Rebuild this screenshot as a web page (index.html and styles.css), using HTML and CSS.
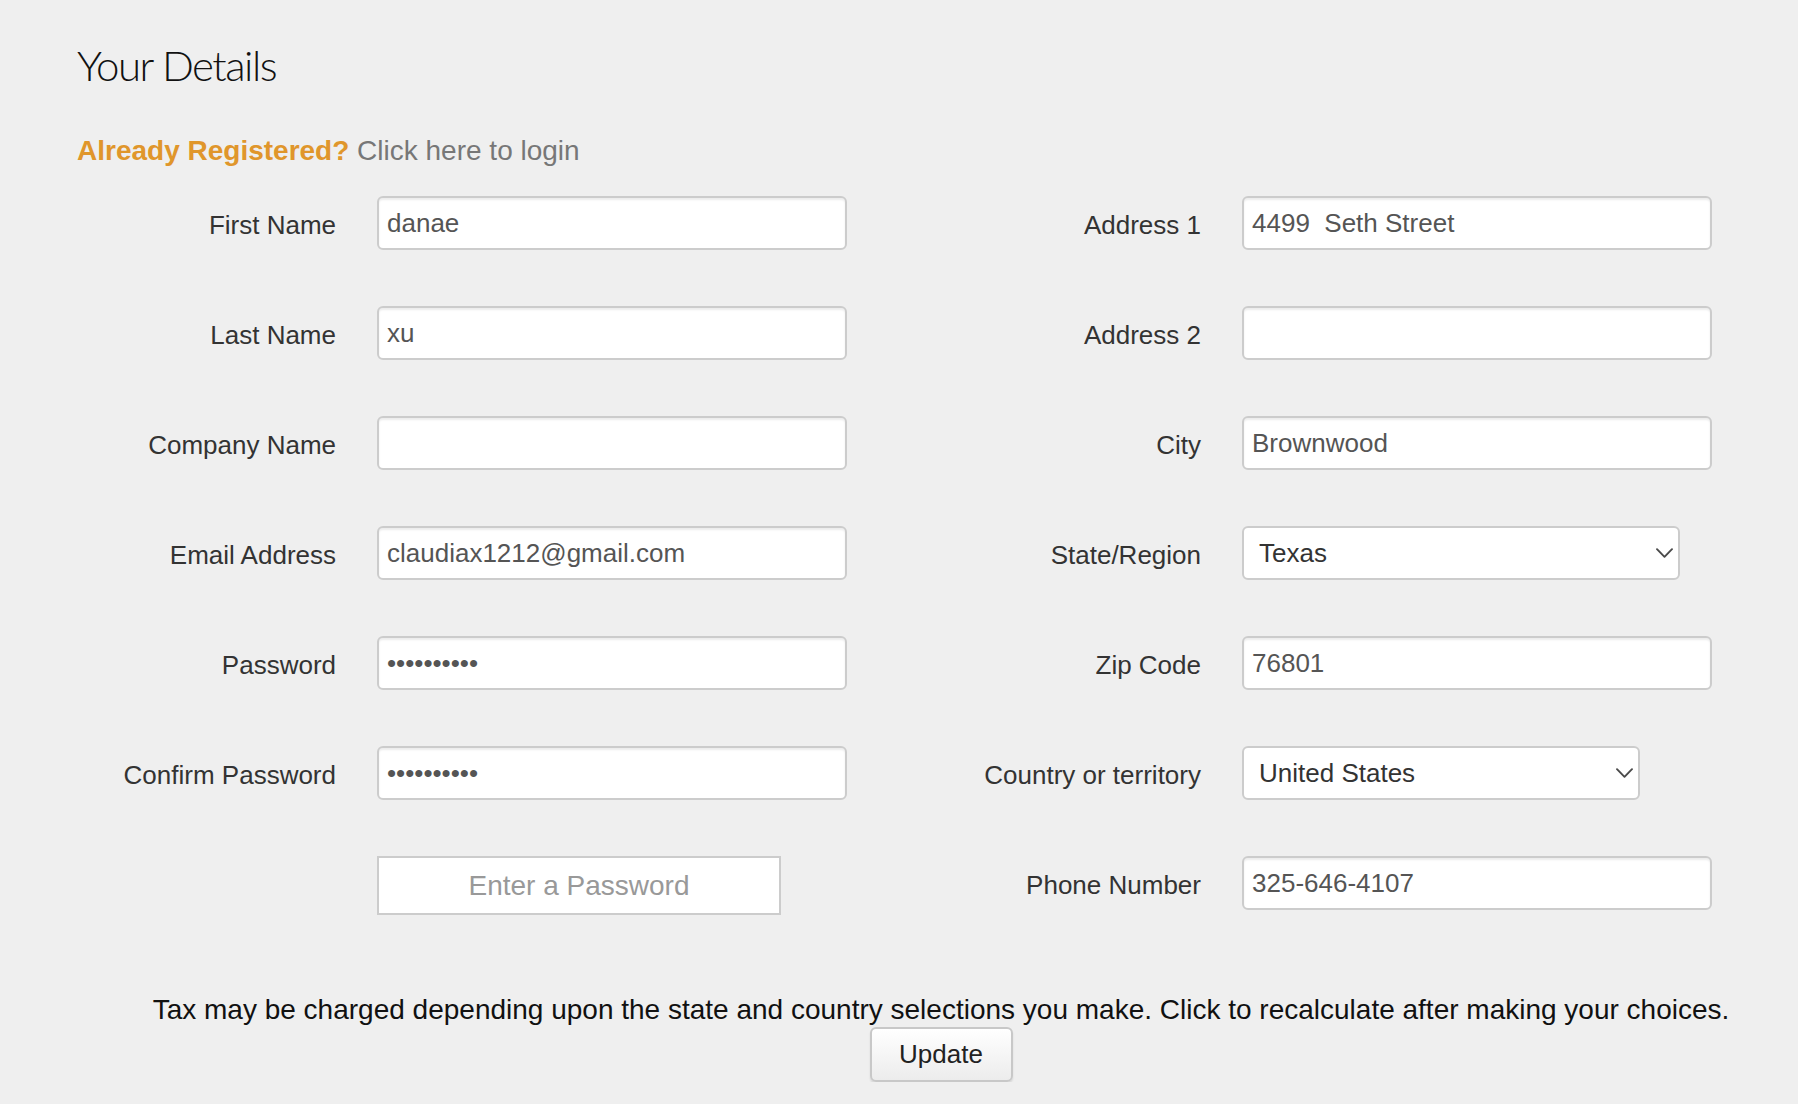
FILE: index.html
```html
<!DOCTYPE html>
<html lang="en">
<head>
<meta charset="utf-8">
<title>Your Details</title>
<link rel="stylesheet" href="styles.css">
</head>
<body>
<div class="page">
  <h1 class="title">Your Details</h1>
  <p class="login"><span class="already">Already Registered?</span> <a class="login-link" href="#">Click here to login</a></p>
  <form class="grid">
    <label class="lbl">First Name</label>
    <input class="field" type="text" value="danae">
    <label class="lbl">Address 1</label>
    <input class="field" type="text" value="4499  Seth Street">

    <label class="lbl">Last Name</label>
    <input class="field" type="text" value="xu">
    <label class="lbl">Address 2</label>
    <input class="field" type="text" value="">

    <label class="lbl">Company Name</label>
    <input class="field" type="text" value="">
    <label class="lbl">City</label>
    <input class="field" type="text" value="Brownwood">

    <label class="lbl">Email Address</label>
    <input class="field" type="text" value="claudiax1212@gmail.com">
    <label class="lbl">State/Region</label>
    <div class="select state">
      <select><option>Texas</option></select>
      <svg class="chev" viewBox="0 0 17 10" aria-hidden="true"><path d="M1 1.2 L8.5 8.8 L16 1.2" fill="none" stroke="#4a4a4a" stroke-width="1.9" stroke-linecap="round" stroke-linejoin="round"/></svg>
    </div>

    <label class="lbl">Password</label>
    <input class="field" type="password" value="aaaaaaaaaa">
    <label class="lbl">Zip Code</label>
    <input class="field" type="text" value="76801">

    <label class="lbl">Confirm Password</label>
    <input class="field" type="password" value="aaaaaaaaaa">
    <label class="lbl">Country or territory</label>
    <div class="select country">
      <select><option>United States</option></select>
      <svg class="chev" viewBox="0 0 17 10" aria-hidden="true"><path d="M1 1.2 L8.5 8.8 L16 1.2" fill="none" stroke="#4a4a4a" stroke-width="1.9" stroke-linecap="round" stroke-linejoin="round"/></svg>
    </div>

    <span class="empty"></span>
    <div class="enter">Enter a Password</div>
    <label class="lbl">Phone Number</label>
    <input class="field" type="text" value="325-646-4107">
  </form>
  <div class="footer">
    <p class="tax">Tax may be charged depending upon the state and country selections you make. Click to recalculate after making your choices.</p>
    <button class="update" type="button">Update</button>
  </div>
</div>
</body>
</html>
```
FILE: styles.css
```css
html, body {
  margin: 0;
  background: #efefef;
}
body {
  font-family: "Liberation Sans", Arial, sans-serif;
  overflow: hidden;
}
.page {
  padding: 40px 0 0 77px;
}
.title {
  margin: 0;
  font-family: Lato, "Open Sans", sans-serif;
  font-weight: 300;
  font-size: 42px;
  line-height: 50px;
  letter-spacing: -1.5px;
  color: #111;
}
.login {
  margin: 45px 0 0;
  font-size: 28px;
  line-height: 32px;
}
.already {
  color: #e0962b;
  font-weight: bold;
}
.login-link {
  color: #777;
  text-decoration: none;
}
.grid {
  display: grid;
  grid-template-columns: 259px 470px 313px 470px;
  column-gap: 41px;
  row-gap: 56px;
  margin-top: 29px;
  align-items: start;
}
.lbl {
  box-sizing: border-box;
  height: 54px;
  padding-top: 4px;
  display: flex;
  align-items: center;
  justify-content: flex-end;
  font-size: 26px;
  color: #333;
  white-space: nowrap;
}
.field {
  box-sizing: border-box;
  width: 100%;
  height: 54px;
  margin: 0;
  border: 2px solid #ccc;
  border-radius: 6px;
  background: #fff;
  box-shadow: inset 0 2px 2px rgba(0, 0, 0, 0.075);
  padding: 0 8px;
  font: 26px "Liberation Sans", Arial, sans-serif;
  color: #555;
  outline: none;
}
.select {
  position: relative;
  width: 438px;
}
.select.country {
  width: 398px;
}
.select select {
  -webkit-appearance: none;
  appearance: none;
  box-sizing: border-box;
  width: 100%;
  height: 54px;
  margin: 0;
  border: 2px solid #ccc;
  border-radius: 6px;
  background: #fff;
  padding: 0 40px 0 15px;
  font: 26px "Liberation Sans", Arial, sans-serif;
  color: #333;
  outline: none;
}
.chev {
  position: absolute;
  right: 7px;
  top: 22px;
  width: 17px;
  height: 10px;
  pointer-events: none;
}
.enter {
  box-sizing: border-box;
  width: 404px;
  height: 59px;
  border: 2px solid #ccc;
  background: #fff;
  display: flex;
  align-items: center;
  justify-content: center;
  font-size: 28px;
  color: #999;
}
.footer {
  margin: 79px 0 0 7px;
  text-align: center;
}
.tax {
  margin: 0;
  font-size: 28px;
  line-height: 32px;
  color: #111;
}
.update {
  display: block;
  margin: 1px auto 0;
  box-sizing: border-box;
  width: 143px;
  height: 55px;
  border: 2px solid #c8c8c8;
  border-radius: 6px;
  background: linear-gradient(#ffffff, #ececec);
  box-shadow: 0 2px 2px rgba(0, 0, 0, 0.1);
  font: 26px "Liberation Sans", Arial, sans-serif;
  color: #222;
  padding: 0;
}
```
